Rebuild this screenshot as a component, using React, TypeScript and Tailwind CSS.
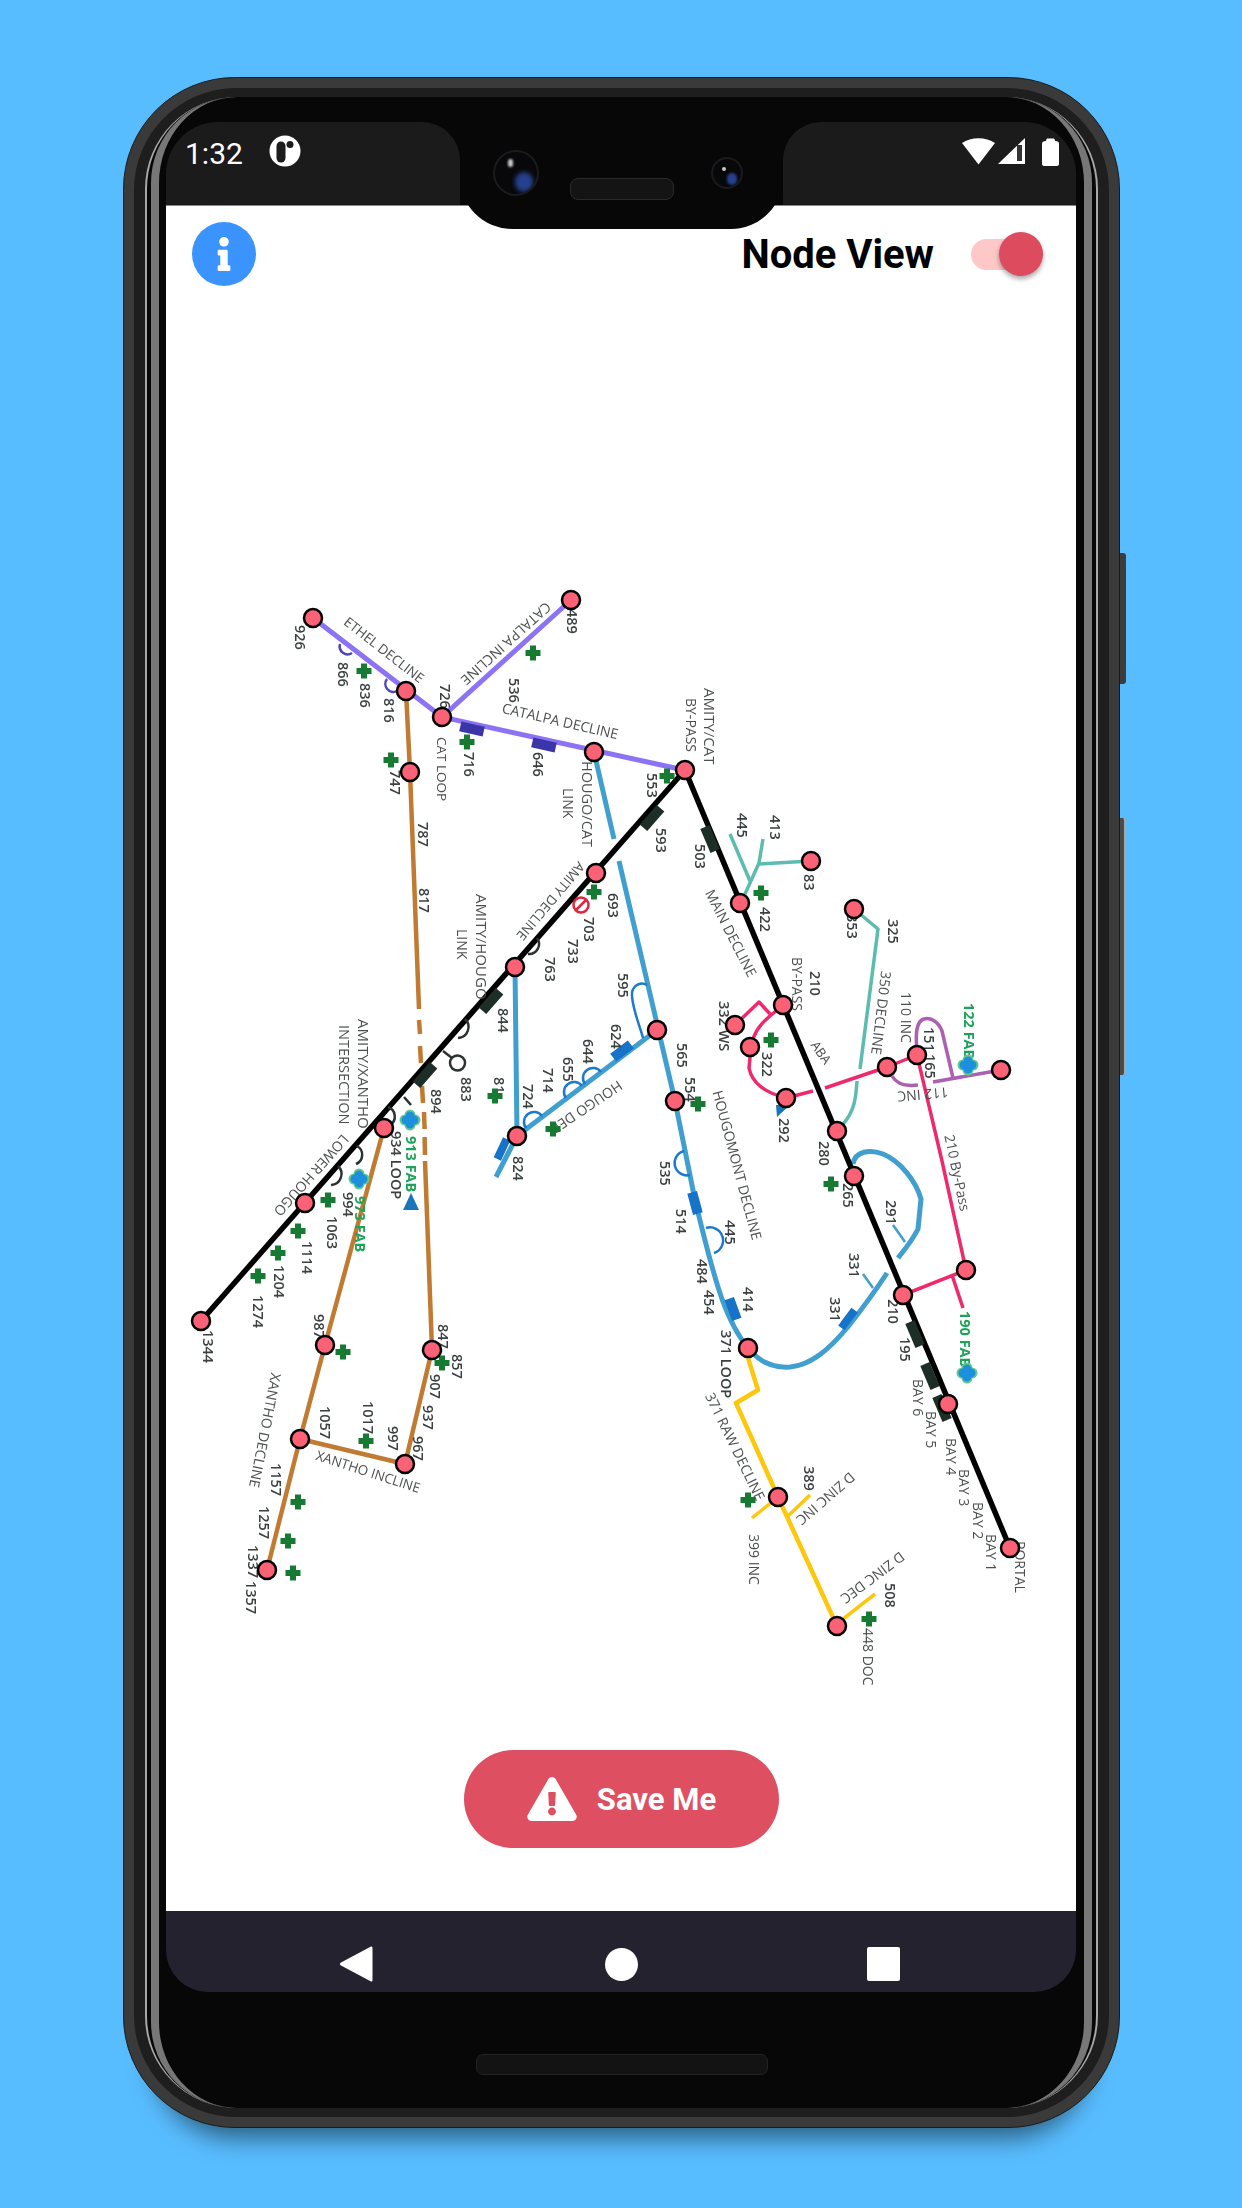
import React from "react";
import { FaInfo, FaExclamationTriangle } from "react-icons/fa";

type Label = [string, number, number, number?, number?];

const NUMS: Label[] = [
  ["926", 299, 624], ["866", 342, 661], ["836", 364, 682], ["816", 388, 697], ["726", 444, 683],
  ["716", 468, 751], ["646", 537, 751], ["489", 571, 608], ["536", 513, 677], ["747", 394, 769],
  ["787", 422, 821], ["817", 423, 887], ["553", 651, 772], ["593", 660, 827], ["503", 699, 843],
  ["693", 612, 892], ["703", 588, 916], ["733", 572, 938], ["763", 549, 956], ["844", 502, 1007],
  ["595", 622, 972], ["624", 615, 1023], ["644", 587, 1038], ["655", 567, 1056], ["714", 547, 1067],
  ["565", 681, 1042], ["554", 689, 1076], ["883", 465, 1076], ["81", 498, 1076], ["724", 527, 1083],
  ["824", 517, 1155], ["894", 435, 1088], ["934 LOOP", 395, 1130], ["994", 347, 1191], ["1063", 331, 1215],
  ["1114", 306, 1240], ["1204", 278, 1264], ["1274", 257, 1294], ["1344", 207, 1329], ["987", 318, 1313],
  ["847", 442, 1323], ["857", 456, 1353], ["907", 434, 1373], ["937", 427, 1404], ["967", 417, 1435],
  ["997", 392, 1425], ["1017", 367, 1400], ["1057", 324, 1405], ["1157", 275, 1462], ["1257", 263, 1505],
  ["1337", 252, 1544], ["1357", 250, 1580], ["445", 741, 812], ["413", 774, 814], ["83", 808, 873],
  ["422", 764, 906], ["353", 851, 913], ["325", 892, 918], ["151", 928, 1026], ["165", 929, 1053],
  ["210", 814, 970], ["322", 766, 1051], ["292", 783, 1117], ["280", 823, 1140], ["210", 892, 1298],
  ["195", 904, 1336], ["291", 890, 1199], ["331", 853, 1252], ["331", 834, 1296], ["414", 747, 1286],
  ["445", 729, 1219], ["484", 701, 1258], ["454", 708, 1289], ["514", 680, 1208], ["535", 664, 1160],
  ["265", 847, 1182], ["389", 808, 1465], ["508", 889, 1582], ["371 LOOP", 725, 1329], ["332 WS", 723, 1000],
];

const NAMES: Label[] = [
  ["ETHEL DECLINE", 345, 620, 38, 13.5], ["CATALPA INCLINE", 548, 603, 138, 14], ["CATALPA DECLINE", 502, 708, 13, 14],
  ["CAT LOOP", 441, 736, 90, 13.5], ["HOUGO/CAT", 586, 760, 90, 14.5], ["LINK", 567, 787, 90, 14], ["AMITY/CAT", 708, 687, 90, 15],
  ["BY-PASS", 690, 697, 90, 14], ["AMITY DECLINE", 581, 862, 130, 13.5], ["AMITY/HOUGO", 480, 893, 90, 15], ["LINK", 461, 928, 90, 14],
  ["AMITY/XANTHO", 362, 1018, 90, 15], ["INTERSECTION", 343, 1024, 90, 14.5], ["MAIN DECLINE", 708, 890, 63, 14],
  ["HOUGO DEB", 620, 1082, 146, 14], ["LOWER HOUGO", 345, 1135, 132, 14], ["XANTHO INCLINE", 316, 1455, 18, 13.5],
  ["XANTHO DECLINE", 275, 1372, 101, 14], ["HOUGOMONT DECLINE", 716, 1090, 75, 14], ["371 RAW DECLINE", 708, 1393, 64, 14],
  ["D ZINC INC", 852, 1473, 139, 14], ["D ZINC DEC", 902, 1553, 143, 14], ["399 INC", 753, 1533, 90, 14], ["448 DOC", 867, 1627, 90, 14],
  ["PORTAL", 1019, 1540, 90, 14], ["BAY 1", 990, 1533, 90, 14], ["BAY 2", 977, 1501, 90, 14], ["BAY 3", 963, 1468, 90, 14],
  ["BAY 4", 950, 1437, 90, 14], ["BAY 5", 930, 1410, 90, 14], ["BAY 6", 917, 1378, 90, 14], ["350 DECLINE", 885, 970, 97, 14],
  ["110 INC", 905, 991, 90, 14], ["112 INC", 948, 1090, 175, 14], ["BY-PASS", 796, 956, 90, 14], ["ABA", 813, 1042, 55, 13],
  ["210 By-Pass", 948, 1134, 78, 14],
];

const GREEN_TEXT: Label[] = [
  ["913 FAB", 410, 1135, 90], ["973 FAB", 359, 1195, 90], ["122 FAB", 968, 1002, 90], ["190 FAB", 964, 1310, 90],
];

const CROSSES = [
  [364, 670], [533, 652], [467, 741], [391, 759], [667, 775], [594, 891], [328, 1199], [298, 1230], [278, 1252],
  [258, 1275], [343, 1351], [442, 1362], [366, 1440], [298, 1501], [288, 1540], [293, 1572], [495, 1095], [553, 1128],
  [698, 1103], [761, 892], [771, 1039], [831, 1183], [748, 1499], [869, 1618],
];

const NODES = [
  [313, 617], [571, 599], [406, 690], [442, 716], [594, 751], [685, 769], [410, 771], [596, 872], [515, 966], [657, 1029],
  [384, 1127], [305, 1202], [201, 1320], [325, 1344], [432, 1349], [300, 1438], [405, 1463], [267, 1569], [517, 1135],
  [675, 1100], [811, 860], [740, 902], [854, 908], [783, 1004], [735, 1024], [750, 1046], [887, 1066], [917, 1054],
  [1001, 1069], [786, 1097], [837, 1130], [854, 1175], [966, 1269], [903, 1294], [748, 1347], [948, 1403], [778, 1496],
  [1010, 1547], [837, 1625],
];

const BLACK_TABS = [
  [652, 817, 131], [491, 1000, 131], [425, 1074, 131], [710, 838, 67], [915, 1333, 67], [930, 1375, 67], [942, 1407, 67],
];
const PURPLE_TABS = [[472, 728, 13], [544, 744, 13]];
const BLUE_TABS = [
  [622, 1050, 143, 10], [502, 1148, 115, 8], [695, 1202, 75, 10], [733, 1308, 70, 10], [848, 1318, 127, 8],
];
const FABS = [[410, 1119], [359, 1178], [968, 1064], [967, 1372]];

function MapDrawing() {
  return (
    <svg viewBox="166 301 910 1419" width="910" height="1419" className="block">
      <defs>
        <filter id="soft" x="-5%" y="-5%" width="110%" height="110%">
          <feGaussianBlur stdDeviation="0.5" />
        </filter>
      </defs>
      <g filter="url(#soft)">
        <g fill="none" strokeLinejoin="round">
          <g stroke="#8c72f4" strokeWidth="5">
            <path d="M313 617L442 716L684 769" />
            <path d="M571 599L442 716" />
          </g>
          <g stroke="#4f45b8" strokeWidth="2.5">
            <path d="M340 643A8 8 0 0 0 352 652" />
            <path d="M387 678A8 8 0 0 0 397 690" />
          </g>
          <g stroke="#c07a30" strokeWidth="4.5">
            <path d="M406 690L410 771L419 1008M419 1019L420 1033M420 1045L421 1062M422 1085L423 1102M424 1111L424.6 1128M424.6 1136L425 1154M425 1160L432 1349L405 1463L300 1438" />
            <path d="M384 1127L325 1344L300 1438L267 1569" />
          </g>
          <g stroke="#3f9fcf" strokeWidth="5">
            <path d="M594 751L614 838M619 860L675 1100L695 1199C705 1240 712 1270 722 1298C730 1320 738 1335 748 1347C760 1362 775 1367 790 1366C812 1364 830 1347 847 1327C862 1308 876 1289 887 1272" />
            <path d="M898 1257C905 1248 912 1240 918 1228L921 1198C916 1180 900 1160 883 1153C870 1148 855 1150 853 1163" />
            <path d="M515 966L517 1135L496 1176" />
            <path d="M657 1029L517 1135" />
            <path d="M863 1273L873 1287M893 1224L905 1241" strokeWidth="2.5" />
          </g>
          <g stroke="#1b78d0" strokeWidth="2.5">
            <path d="M647 984C640 980 631 985 632 995C633 1010 640 1025 643 1037" />
            <path d="M585 1083A9 9 0 0 1 601 1071" />
            <path d="M566 1097A9 9 0 0 1 582 1085" />
            <path d="M526 1127A9 9 0 0 1 542 1115" />
            <path d="M684 1150A12 12 0 0 0 690 1174" />
            <path d="M706 1227A12 12 0 0 1 714 1252" />
          </g>
          <g stroke="#5bbcb0" strokeWidth="3.5">
            <path d="M730 833L750 880" />
            <path d="M763 838L759 862L745 893" />
            <path d="M759 863L811 860" />
            <path d="M854 908L878 928L860 1068M857 1080C856 1095 855 1110 843 1123" />
          </g>
          <g stroke="#ab60b2" strokeWidth="3.5">
            <path d="M1001 1069L933 1081" />
            <path d="M953 1077L942 1030C938 1020 930 1016 924 1018C917 1020 915 1030 917 1050" />
            <path d="M892 1075C896 1082 903 1086 918 1084" />
          </g>
          <g stroke="#ee2b6c" strokeWidth="3.5">
            <path d="M735 1024L759 1001L771 1014" />
            <path d="M783 1004L770 1015C760 1023 753 1032 751 1046L749 1067C752 1082 766 1092 786 1097L813 1090M825 1087L887 1066L917 1054L942 1160L966 1269L903 1294" />
            <path d="M952 1274L963 1307" />
          </g>
          <g stroke="#fdc70a" strokeWidth="4.5">
            <path d="M748 1357L758 1389L736 1402L778 1496L837 1625" />
            <path d="M752 1517L778 1496" strokeWidth="3.5" />
            <path d="M788 1515L810 1494" strokeWidth="3.5" />
            <path d="M843 1618L875 1593" strokeWidth="3.5" />
          </g>
          <g stroke="#000" strokeWidth="5.5">
            <path d="M685 769L201 1320" />
            <path d="M685 769L1010 1547" />
          </g>
          <g stroke="#2b3330" strokeWidth="2.5">
            <path d="M537 937A10 10 0 0 1 528 953" />
            <path d="M465 1018A11 11 0 0 1 458 1037" />
            <circle cx="457.5" cy="1062" r="7.5" />
            <path d="M443 1050L452 1057" />
            <path d="M404 1096L411 1104" />
            <path d="M388 1106A10 10 0 0 1 390 1124" />
            <path d="M357 1145A10 10 0 0 1 356 1163" />
            <path d="M338 1165A11 11 0 0 1 331 1184" />
          </g>
        </g>
        {BLACK_TABS.map(([x, y, a], i) => (
          <rect key={i} x="-13" y="-5" width="26" height="10" fill="#1d2d28" transform={`translate(${x} ${y}) rotate(${a})`} />
        ))}
        {PURPLE_TABS.map(([x, y, a], i) => (
          <rect key={i} x="-12" y="-5" width="24" height="10" fill="#3a36a8" transform={`translate(${x} ${y}) rotate(${a})`} />
        ))}
        {BLUE_TABS.map(([x, y, a, h], i) => (
          <rect key={i} x="-11" y={-h / 2} width="22" height={h} fill="#1273c8" transform={`translate(${x} ${y}) rotate(${a})`} />
        ))}
        <g fontFamily="'Open Sans', sans-serif">
          {NAMES.map(([t, x, y, a, s], i) => (
            <text key={i} transform={`translate(${x} ${y}) rotate(${a})`} fill="#4c5050" fontWeight="500" fontSize={s} dominantBaseline="middle">
              {t}
            </text>
          ))}
          {NUMS.map(([t, x, y], i) => (
            <text key={i} transform={`translate(${x} ${y}) rotate(90)`} fill="#3a3f3f" fontWeight="600" fontSize="14.5" dominantBaseline="middle">
              {t}
            </text>
          ))}
          {GREEN_TEXT.map(([t, x, y, a], i) => (
            <text key={i} transform={`translate(${x} ${y}) rotate(${a})`} fill="#1fa45a" fontWeight="700" fontSize="14.5" dominantBaseline="middle">
              {t}
            </text>
          ))}
        </g>
        {FABS.map(([x, y], i) => (
          <g key={i} fill="none" strokeLinecap="round">
            <path d={`M${x - 5} ${y}h10M${x} ${y - 5}v10`} stroke="#63c98c" strokeWidth="11" />
            <path d={`M${x - 4} ${y}h8M${x} ${y - 4}v8`} stroke="#1e90dc" strokeWidth="9" />
          </g>
        ))}
        <path d="M403 1209L411 1192L419 1209Z" fill="#1b74b8" />
        <path d="M776 1104L790 1104L777 1116Z" fill="#1b74b8" />
        <g fill="none" stroke="#e0263c" strokeWidth="2.5">
          <circle cx="581" cy="904" r="7.5" />
          <path d="M576 909L586 899" />
        </g>
        {CROSSES.map(([x, y], i) => (
          <path key={i} d={`M${x - 7.5} ${y}h15M${x} ${y - 7.5}v15`} stroke="#137a30" strokeWidth="6" fill="none" />
        ))}
      </g>
      {NODES.map(([x, y], i) => (
        <circle key={i} cx={x} cy={y} r="9" fill="#fb6275" stroke="#000" strokeWidth="2.5" />
      ))}
    </svg>
  );
}

function StatusLeft() {
  return (
    <div className="w-[294px] h-[83px] bg-[#1b1b1b] rounded-tl-[52px] rounded-tr-[38px] flex items-start pt-[14px] pl-[19px] gap-[26px]">
      <span className="text-white text-[30px] leading-[35px] font-['Roboto',sans-serif]">1:32</span>
      <svg width="32" height="32" viewBox="0 0 32 32" className="-mt-[1px]">
        <circle cx="16" cy="16" r="15.5" fill="#fff" />
        <rect x="7.5" y="6.5" width="9" height="21" rx="4.5" fill="#1b1b1b" />
        <circle cx="21" cy="9.5" r="3.5" fill="#1b1b1b" />
      </svg>
    </div>
  );
}

function StatusRight() {
  return (
    <div className="w-[293px] h-[83px] bg-[#1b1b1b] rounded-tr-[52px] rounded-tl-[38px] flex items-start justify-end pr-[17px] pt-[16px]">
      <svg width="33" height="27" viewBox="0 0 33 27">
        <path d="M0 5C9 -1.500 24 -1.500 33 5L16.500 26.500Z" fill="#fff" />
      </svg>
      <svg width="28" height="27" viewBox="0 0 28 27" className="ml-[3px]">
        <path d="M0 26L27 0V26Z" fill="#fff" />
        <rect x="19" y="7" width="5" height="16" fill="#333" />
      </svg>
      <svg width="17" height="28" viewBox="0 0 17 28" className="ml-[16px]">
        <path d="M4 3C4 1 5 0.500 6 0.500H11C12 0.500 13 1 13 3C16 3 17 4 17 6V26C17 27 16 28 15 28H2C1 28 0 27 0 26V6C0 4 1 3 4 3Z" fill="#fff" />
      </svg>
    </div>
  );
}

function Notch() {
  return (
    <div className="relative z-10 w-[323px] h-[107px] bg-[#070707] rounded-b-[52px] flex items-start pl-[33px] pt-[28px]">
      <div className="relative shrink-0 w-[46px] h-[46px] rounded-full bg-[#08080b] border-2 border-[#1b1b1e] overflow-hidden">
        <div className="absolute left-[20px] top-[20px] w-[18px] h-[20px] rounded-full bg-[#26408c] blur-[2px]" />
        <div className="absolute left-[13px] top-[7px] w-[5px] h-[8px] rounded-full bg-[#c8c8c8] blur-[1px]" />
      </div>
      <div className="shrink-0 ml-[31px] mt-[28px] w-[104px] h-[22px] rounded-[8px] bg-[#141414] border border-[#2a2a2a]" />
      <div className="relative shrink-0 ml-[37px] w-[32px] h-[32px] mt-[7px] rounded-full bg-[#08080b] border-2 border-[#1b1b1e] overflow-hidden">
        <div className="absolute left-[14px] top-[14px] w-[10px] h-[12px] rounded-full bg-[#26408c] blur-[1px]" />
        <div className="absolute left-[9px] top-[8px] w-[4px] h-[4px] rounded-full bg-[#c8c8c8]" />
      </div>
    </div>
  );
}

export default function App() {
  return (
    <div className="w-[1242px] h-[2208px] bg-[#58bdff] pt-[77px] pl-[123px] overflow-hidden font-['Roboto',sans-serif]">
      <div className="relative w-[997px] h-[2051px] rounded-[112px] bg-[#3a3a3a] p-[10px] border border-[#1a1a1a] shadow-[0_40px_24px_-30px_rgba(0,0,0,0.5)]">
        <div className="absolute -right-[7px] top-[475px] w-[6px] h-[131px] rounded-r-[3px] bg-[#3c3c3c]" />
        <div className="absolute -right-[7px] top-[740px] w-[6px] h-[257px] rounded-r-[3px] bg-[#4a4a4a] border-r-2 border-[#a8a8a8]" />
        <div className="w-full h-full rounded-[102px] bg-[#1e1e1e] px-[11px] py-[9px]">
          <div className="w-full h-full rounded-[92px] bg-[#070707] border-x-2 border-[#a8a8a8] px-[4px]">
            <div className="w-full h-full rounded-[86px] border-x-[8px] border-[#777] bg-[#070707] pl-[7px] pr-[8px] pt-[25px] flex flex-col items-center">
              <div className="w-full flex flex-col">
                <div className="flex items-start">
                  <StatusLeft />
                  <Notch />
                  <StatusRight />
                </div>
                <div className="h-[1706px] -mt-[24px] bg-white border-t border-[#888] flex flex-col">
                  <div className="h-[96px] shrink-0 flex items-center justify-between pl-[26px] pr-[37px]">
                    <div className="w-[64px] h-[64px] rounded-full bg-[#3b93fe] flex items-center justify-center">
                      <FaInfo className="text-white w-[30px] h-[34px]" />
                    </div>
                    <div className="flex items-center gap-[37px]">
                      <span className="text-black text-[40px] leading-[47px] font-bold">Node View</span>
                      <div className="relative w-[68px] h-[31px] rounded-full bg-[#fec8c8]">
                        <div className="absolute right-[-4px] top-[-7px] w-[44px] h-[44px] rounded-full bg-[#dc4c5e] shadow-[0_3px_5px_rgba(0,0,0,0.35)]" />
                      </div>
                    </div>
                  </div>
                  <div className="flex-1 min-h-0">
                    <MapDrawing />
                  </div>
                  <div className="h-[191px] shrink-0 pt-[30px] pl-[1px] flex justify-center">
                    <div className="w-[315px] h-[98px] rounded-full bg-[#de5061] flex items-center justify-center gap-[20px]">
                      <FaExclamationTriangle className="text-white w-[50px] h-[44px]" />
                      <span className="text-white text-[31px] leading-[35px] font-bold">Save Me</span>
                    </div>
                  </div>
                </div>
                <div className="h-[81px] bg-[#24222e] rounded-b-[42px] flex items-center justify-between pl-[174px] pr-[176px] pt-[25px]">
                  <svg width="33" height="36" viewBox="0 0 33 36">
                    <path d="M31 0.500C32 0.500 32.500 1 32.500 2V34C32.500 35 32 35.500 31 35.500L1 19.500C-0.500 18.500 -0.500 17.500 1 16.500Z" fill="#fff" />
                  </svg>
                  <div className="w-[33px] h-[33px] ml-[2px] rounded-full bg-white" />
                  <div className="w-[33px] h-[34px] rounded-[2px] bg-white" />
                </div>
              </div>
              <div className="mt-[62px] ml-[2px] w-[292px] h-[21px] rounded-[7px] bg-[#131313] border border-[#222]" />
            </div>
          </div>
        </div>
      </div>
    </div>
  );
}
